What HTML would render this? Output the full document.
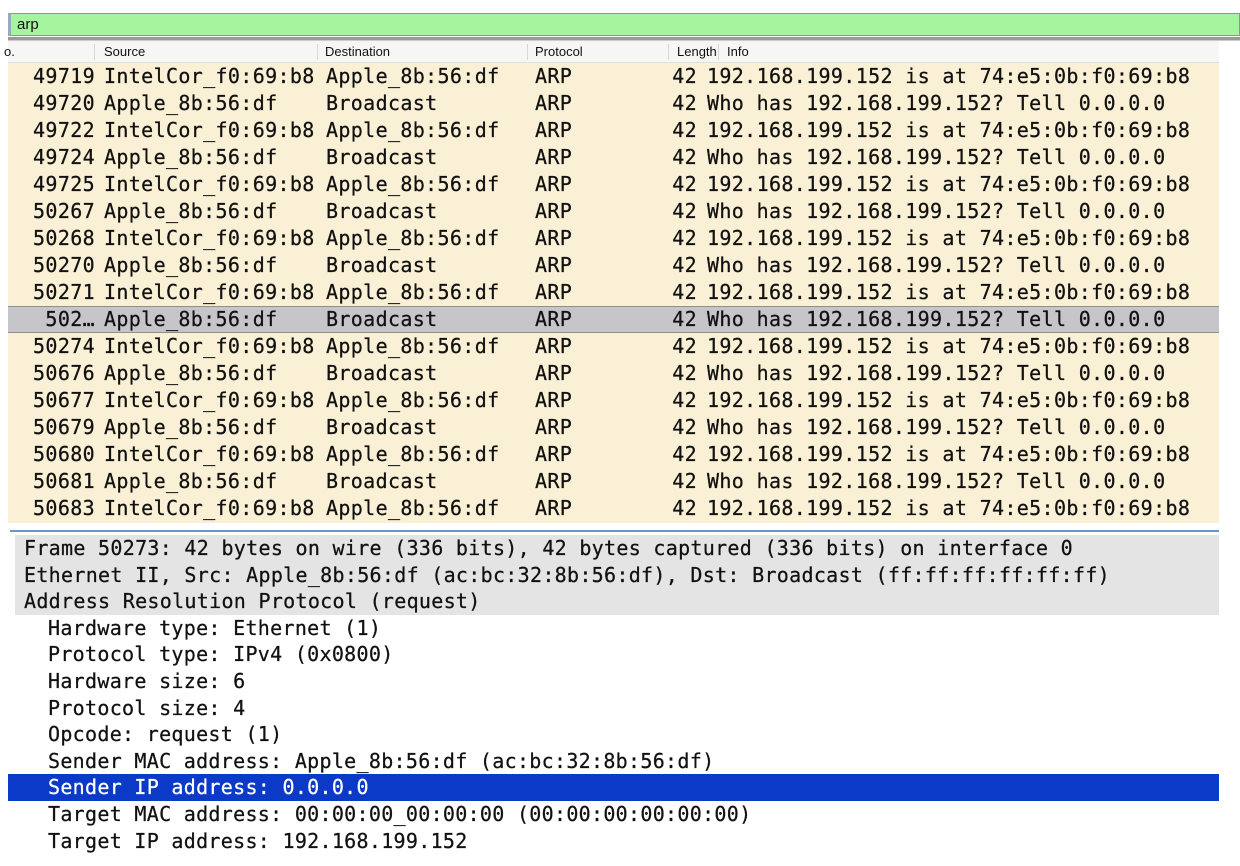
<!DOCTYPE html>
<html><head><meta charset="utf-8"><style>
*{margin:0;padding:0;box-sizing:border-box}
body{width:1240px;height:866px;background:#fff;position:relative;overflow:hidden;font-family:"DejaVu Sans Mono","Liberation Mono",monospace;font-size:20px;color:#111;-webkit-text-stroke:0.25px #111}
.filter{position:absolute;left:8px;top:13px;width:1232px;height:23px;background:#a5f59e;border:1px solid #8a9a88;border-left:3px solid #9ab;font-family:"Liberation Sans",sans-serif;font-size:15px;padding-left:6px;line-height:21px;-webkit-text-stroke:0}
.sep{position:absolute;left:8px;top:37px;width:1232px;height:4px;background:#9a9a9a;border-bottom:1px solid #ccc}
.hdr{position:absolute;left:8px;top:41px;width:1211px;height:22px;background:#f6f6f6;border-bottom:1px solid #ddd;font-family:"Liberation Sans",sans-serif;font-size:13px;line-height:22px;-webkit-text-stroke:0}
.hdr span{position:absolute;top:0}
.hdr i{position:absolute;top:3px;width:1px;height:16px;background:#d8d8d8}
.list{position:absolute;left:8px;top:63px;width:1211px;height:460px;background:#faf0d5}
.r{position:absolute;left:0;width:1211px;height:27px;line-height:27px;white-space:pre;letter-spacing:0.35px}
.r span{position:absolute;top:0}
.sel{background:#c6c6ca;border-top:1px solid #8f8f93;border-bottom:1px solid #8f8f93;line-height:25px}
.blue{position:absolute;left:10px;top:530px;width:1209px;height:2px;background:#6b95c9}
.d{position:absolute;left:15px;width:1204px;height:26.6px;line-height:26.6px;white-space:pre;letter-spacing:0.3px}
.g{background:#e4e4e4}
.hl{background:#0a3ac7;color:#fff;left:8px;width:1211px;-webkit-text-stroke:0.25px #fff}
</style></head><body>
<div class="filter">arp</div>
<div class="sep"></div>
<div class="hdr">
<span style="left:-4px">o.</span>
<i style="left:86px"></i><span style="left:96px">Source</span>
<i style="left:309px"></i><span style="left:317px">Destination</span>
<i style="left:519px"></i><span style="left:527px">Protocol</span>
<i style="left:660px"></i><span style="left:669px">Length</span>
<i style="left:710px"></i><span style="left:719px">Info</span>
</div>
<div class="list" id="list"></div>
<div class="blue"></div>
<div id="det"></div>
<script>
var rows=[
["49719","IntelCor_f0:69:b8","Apple_8b:56:df",0],
["49720","Apple_8b:56:df","Broadcast",1],
["49722","IntelCor_f0:69:b8","Apple_8b:56:df",0],
["49724","Apple_8b:56:df","Broadcast",1],
["49725","IntelCor_f0:69:b8","Apple_8b:56:df",0],
["50267","Apple_8b:56:df","Broadcast",1],
["50268","IntelCor_f0:69:b8","Apple_8b:56:df",0],
["50270","Apple_8b:56:df","Broadcast",1],
["50271","IntelCor_f0:69:b8","Apple_8b:56:df",0],
["502…","Apple_8b:56:df","Broadcast",1],
["50274","IntelCor_f0:69:b8","Apple_8b:56:df",0],
["50676","Apple_8b:56:df","Broadcast",1],
["50677","IntelCor_f0:69:b8","Apple_8b:56:df",0],
["50679","Apple_8b:56:df","Broadcast",1],
["50680","IntelCor_f0:69:b8","Apple_8b:56:df",0],
["50681","Apple_8b:56:df","Broadcast",1],
["50683","IntelCor_f0:69:b8","Apple_8b:56:df",0]];
var h="";
rows.forEach(function(r,i){
var info=r[3]?"Who has 192.168.199.152? Tell 0.0.0.0":"192.168.199.152 is at 74:e5:0b:f0:69:b8";
var sel=i==9;
h+='<div class="r'+(sel?' sel':'')+'" style="top:'+(i*27)+'px">'+
'<span style="right:1124px">'+r[0]+'</span>'+
'<span style="left:96px">'+r[1]+'</span>'+
'<span style="left:318px">'+r[2]+'</span>'+
'<span style="left:527px">ARP</span>'+
'<span style="right:522px">42</span>'+
'<span style="left:699px">'+info+'</span></div>';
});
document.getElementById("list").innerHTML=h;
var d=[
["Frame 50273: 42 bytes on wire (336 bits), 42 bytes captured (336 bits) on interface 0","g",0],
["Ethernet II, Src: Apple_8b:56:df (ac:bc:32:8b:56:df), Dst: Broadcast (ff:ff:ff:ff:ff:ff)","g",0],
["Address Resolution Protocol (request)","g",0],
["Hardware type: Ethernet (1)","",1],
["Protocol type: IPv4 (0x0800)","",1],
["Hardware size: 6","",1],
["Protocol size: 4","",1],
["Opcode: request (1)","",1],
["Sender MAC address: Apple_8b:56:df (ac:bc:32:8b:56:df)","",1],
["Sender IP address: 0.0.0.0","hl",1],
["Target MAC address: 00:00:00_00:00:00 (00:00:00:00:00:00)","",1],
["Target IP address: 192.168.199.152","",1]];
var k="";
d.forEach(function(x,i){
var pad=x[2]?(x[1]=="hl"?40:33):9;
k+='<div class="d '+x[1]+'" style="top:'+(535+i*26.6)+'px;padding-left:'+pad+'px">'+x[0]+'</div>';
});
document.getElementById("det").innerHTML=k;
</script>
</body></html>
